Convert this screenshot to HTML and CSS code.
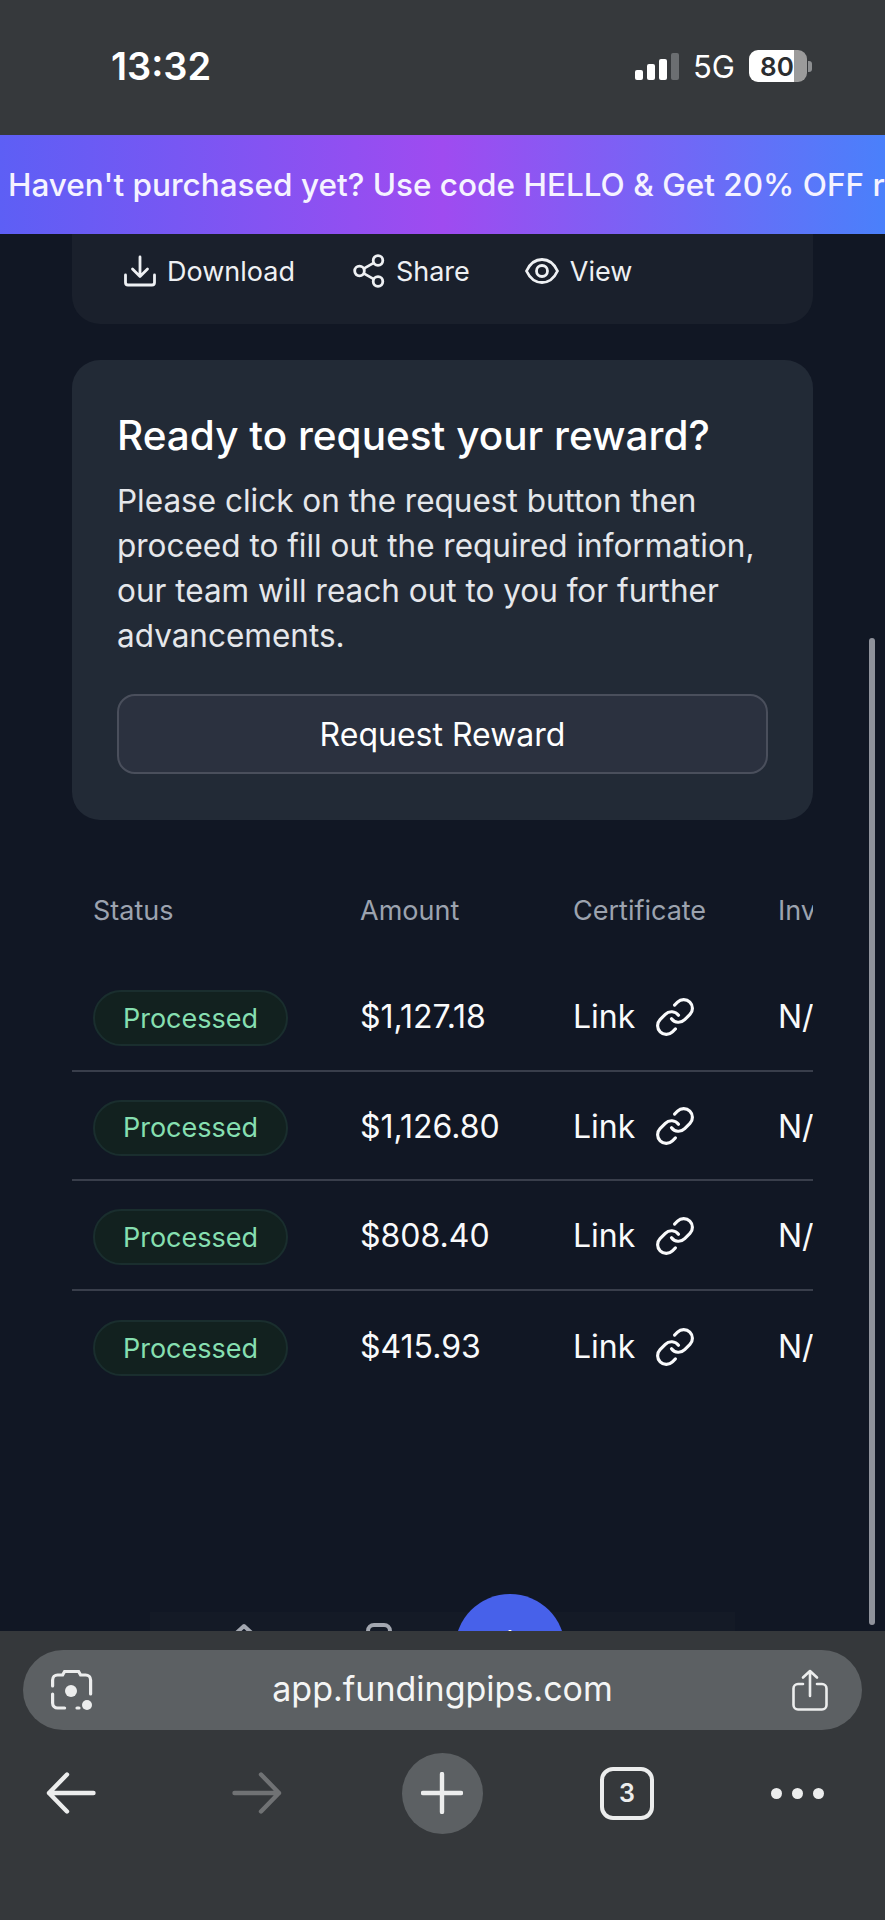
FILE: index.html
```html
<!DOCTYPE html>
<html lang="en">
<head>
    <meta charset="UTF-8">
    <meta name="viewport" content="width=device-width, initial-scale=1.0">
    <title>FundingPips</title>
    <link rel="stylesheet" href="styles.css">
</head>
<body>
    <div id="screen">
        <div class="status-bar">
            <span class="time">13:32</span>
            <div class="status-right">
                <div class="signal">
                    <span class="bar bar-1"></span>
                    <span class="bar bar-2"></span>
                    <span class="bar bar-3"></span>
                    <span class="bar bar-4"></span>
                </div>
                <span class="network">5G</span>
                <div class="battery"><span>80</span></div>
                <span class="battery-nub"></span>
            </div>
        </div>

        <div class="promo">Haven't purchased yet? Use code HELLO &amp; Get 20% OFF right now</div>

        <div id="page">
            <div class="card actions-card">
                <a class="action">
                    <svg width="32" height="32" viewBox="0 0 32 32" fill="none" stroke="currentColor" stroke-width="2.8" stroke-linecap="round" stroke-linejoin="round"><path d="M16 2v19M8.5 14l7.500 7.500 7.500-7.500"/><path d="M1.500 20v7.500a2.500 2.500 0 0 0 2.500 2.500h24a2.500 2.500 0 0 0 2.500-2.500V20"/></svg>
                    Download
                </a>
                <a class="action">
                    <svg width="32" height="34" viewBox="0 0 32 34" fill="none" stroke="currentColor" stroke-width="2.8"><circle cx="6.500" cy="17" r="4.800"/><circle cx="25" cy="6.500" r="4.800"/><circle cx="25" cy="27.500" r="4.800"/><path d="M10.700 14.600l10.100-5.700M10.700 19.400l10.100 5.700"/></svg>
                    Share
                </a>
                <a class="action">
                    <svg width="34" height="26" viewBox="0 0 34 26" fill="none" stroke="currentColor" stroke-width="2.8"><path d="M1.500 13C5 5.500 10.500 1.500 17 1.500S29 5.500 32.500 13C29 20.500 23.500 24.500 17 24.500S5 20.500 1.500 13z"/><circle cx="17" cy="13" r="5.500"/></svg>
                    View
                </a>
            </div>

            <div class="card reward-card">
                <h2>Ready to request your reward?</h2>
                <p>Please click on the request button then proceed to fill out the required information, our team will reach out to you for further advancements.</p>
                <button class="reward-btn">Request Reward</button>
            </div>

            <div class="table-wrap">
                <div class="row head-row">
                    <span>Status</span>
                    <span>Amount</span>
                    <span>Certificate</span>
                    <span>Invoice</span>
                </div>
                <div class="row">
                    <span><span class="pill">Processed</span></span>
                    <span>$1,127.18</span>
                    <span class="link">Link <svg width="42" height="42" viewBox="0 0 24 24" fill="none" stroke="currentColor" stroke-width="1.800" stroke-linecap="round" stroke-linejoin="round"><path d="M10 13a5 5 0 0 0 7.540.54l3-3a5 5 0 0 0-7.070-7.070l-1.720 1.710"/><path d="M14 11a5 5 0 0 0-7.540-.54l-3 3a5 5 0 0 0 7.070 7.070l1.710-1.710"/></svg></span>
                    <span>N/A</span>
                </div>
                <div class="row">
                    <span><span class="pill">Processed</span></span>
                    <span>$1,126.80</span>
                    <span class="link">Link <svg width="42" height="42" viewBox="0 0 24 24" fill="none" stroke="currentColor" stroke-width="1.800" stroke-linecap="round" stroke-linejoin="round"><path d="M10 13a5 5 0 0 0 7.540.54l3-3a5 5 0 0 0-7.070-7.070l-1.720 1.710"/><path d="M14 11a5 5 0 0 0-7.540-.54l-3 3a5 5 0 0 0 7.070 7.070l1.710-1.710"/></svg></span>
                    <span>N/A</span>
                </div>
                <div class="row">
                    <span><span class="pill">Processed</span></span>
                    <span>$808.40</span>
                    <span class="link">Link <svg width="42" height="42" viewBox="0 0 24 24" fill="none" stroke="currentColor" stroke-width="1.800" stroke-linecap="round" stroke-linejoin="round"><path d="M10 13a5 5 0 0 0 7.540.54l3-3a5 5 0 0 0-7.070-7.070l-1.720 1.710"/><path d="M14 11a5 5 0 0 0-7.540-.54l-3 3a5 5 0 0 0 7.070 7.070l1.710-1.710"/></svg></span>
                    <span>N/A</span>
                </div>
                <div class="row">
                    <span><span class="pill">Processed</span></span>
                    <span>$415.93</span>
                    <span class="link">Link <svg width="42" height="42" viewBox="0 0 24 24" fill="none" stroke="currentColor" stroke-width="1.800" stroke-linecap="round" stroke-linejoin="round"><path d="M10 13a5 5 0 0 0 7.540.54l3-3a5 5 0 0 0-7.070-7.070l-1.720 1.710"/><path d="M14 11a5 5 0 0 0-7.540-.54l-3 3a5 5 0 0 0 7.070 7.070l1.710-1.710"/></svg></span>
                    <span>N/A</span>
                </div>
            </div>

            <!-- floating app nav, mostly hidden behind the browser bar -->
            <div class="float-nav">
                <svg class="nav-home" width="32" height="32" viewBox="0 0 32 32" fill="none" stroke="#a3a7b0" stroke-width="4" stroke-linejoin="round"><path d="M4 14L16 3l12 11v14H4z"/></svg>
                <span class="nav-box"></span>
                <span class="nav-fab">
                    <svg width="38" height="38" viewBox="0 0 38 38" fill="none" stroke="#fff" stroke-width="3" stroke-linecap="round"><path d="M19 1v36M1 19h36"/></svg>
                </span>
            </div>
            <span class="scrollbar"></span>
        </div>

        <div class="browser-bar">
            <div class="url-bar">
                <svg width="42" height="42" viewBox="0 0 42 42" fill="none" stroke="#eceded" stroke-width="3.200" stroke-linecap="round"><path d="M1.600 17V11a5 5 0 0 1 5-5h5l2-3.500h14l2 3.500h5a5 5 0 0 1 5 5v14"/><path d="M1.600 25v9a5 5 0 0 0 5 5h7M26 39h2"/><circle cx="20" cy="22" r="6" fill="#eceded" stroke="none"/><circle cx="36" cy="36" r="5" fill="#eceded" stroke="none"/></svg>
                <span class="url">app.fundingpips.com</span>
                <svg width="36" height="42" viewBox="0 0 36 42" fill="none" stroke="#eceded" stroke-width="2.600" stroke-linecap="round" stroke-linejoin="round"><path d="M18 27V2M11 8.500L18 2l7 6.500"/><path d="M11 15H6a4.500 4.500 0 0 0-4.500 4.500V36A4.500 4.500 0 0 0 6 40.500h24a4.500 4.500 0 0 0 4.500-4.500V19.500A4.500 4.500 0 0 0 30 15h-5"/></svg>
            </div>
            <div class="browser-nav">
                <svg width="50" height="42" viewBox="0 0 50 42" fill="none" stroke="#eceded" stroke-width="4.400" stroke-linecap="round" stroke-linejoin="round"><path d="M47.500 21H3M21 2.500L3 21l18 18.500"/></svg>
                <svg width="50" height="42" viewBox="0 0 50 42" fill="none" stroke="#707274" stroke-width="4.400" stroke-linecap="round" stroke-linejoin="round"><path d="M2.500 21H47M29 2.500L47 21 29 39.500"/></svg>
                <span class="plus-btn">
                    <svg width="42" height="42" viewBox="0 0 42 42" fill="none" stroke="#eceded" stroke-width="4.400" stroke-linecap="round"><path d="M21 2v38M2 21h38"/></svg>
                </span>
                <span class="tabs-btn">3</span>
                <span class="more-btn"><i></i><i></i><i></i></span>
            </div>
        </div>
    </div>
</body>
</html>
```

FILE: styles.css
```css
* {
    box-sizing: border-box;
}

body {
    margin: 0;
    background-color: #111724;
    font-family: Inter, "Liberation Sans", sans-serif;
    color: #f3f4f6;
}

#screen {
    display: flex;
    flex-direction: column;
    width: 885px;
    height: 1920px;
    overflow: hidden;
}

/* phone status bar */
.status-bar {
    flex: none;
    display: flex;
    justify-content: space-between;
    align-items: center;
    height: 135px;
    padding: 0 73px 3px 111px;
    background-color: #36393c;
}

.time {
    font-size: 38px;
    font-weight: 600;
    color: #fff;
}

.status-right {
    display: flex;
    align-items: center;
}

.signal {
    display: flex;
    align-items: flex-end;
    gap: 4px;
    height: 27px;
    margin-right: 14px;
}

.bar {
    width: 8px;
    border-radius: 2px;
    background-color: #fff;
}

.bar-1 { height: 10px; }
.bar-2 { height: 16px; }
.bar-3 { height: 21px; }
.bar-4 { height: 27px; background-color: #6b6e71; }

.network {
    margin-right: 14px;
    font-size: 31px;
    color: #fff;
}

.battery {
    display: flex;
    align-items: center;
    width: 58px;
    height: 32px;
    padding-left: 11px;
    border-radius: 9px;
    background: linear-gradient(to right, #fff 45px, #9b9b9b 45px);
    font-size: 26px;
    font-weight: 600;
    color: #2b2d30;
}

.battery-nub {
    width: 4px;
    height: 11px;
    margin-left: 1px;
    border-radius: 0 3px 3px 0;
    background-color: #8d8f91;
}

/* promo banner */
.promo {
    flex: none;
    height: 99px;
    padding-left: 8px;
    line-height: 100px;
    font-size: 31.5px;
    font-weight: 500;
    white-space: nowrap;
    overflow: hidden;
    color: #f5f3ff;
    background: linear-gradient(to right, #5d5ff5 0%, #9f4bf0 50%, #4a80fb 100%);
}

/* page content */
#page {
    position: relative;
    flex: 1;
    padding: 0 72px;
    overflow: hidden;
    background-color: #111724;
}

.card {
    border-radius: 28px;
}

.actions-card {
    display: flex;
    height: 90px;
    padding: 19px 0 0 52px;
    border-radius: 0 0 28px 28px;
    background-color: #1a202c;
}

.action {
    display: flex;
    align-items: center;
    gap: 11px;
    height: 36px;
    margin-right: 58px;
    font-size: 27px;
    color: #eef0f3;
}

.action:nth-child(2) {
    margin-right: 55px;
}

.reward-card {
    margin-top: 36px;
    padding: 49px 45px 46px;
    background-color: #222a36;
}

.reward-card h2 {
    margin: 0 0 15px;
    font-size: 40.5px;
    line-height: 54px;
    font-weight: 500;
    color: #fff;
}

.reward-card p {
    margin: 0 0 36px;
    font-size: 31.5px;
    line-height: 45px;
    color: #e5e7eb;
}

.reward-btn {
    display: block;
    width: 100%;
    height: 80px;
    border: 2px solid #4a4f5c;
    border-radius: 18px;
    background-color: #2b313f;
    font-family: inherit;
    font-size: 32px;
    font-weight: 400;
    color: #fff;
}

/* table, cut off on the right like the original scroller */
.table-wrap {
    margin-top: 50px;
    overflow: hidden;
}

.row {
    display: grid;
    grid-template-columns: 267px 213px 205px 200px;
    align-items: center;
    width: 885px;
    height: 109.6px;
    padding-top: 2px;
    border-bottom: 2px solid #393e4b;
    font-size: 32px;
    white-space: nowrap;
    color: #f9fafb;
}

.row > span {
    padding-left: 21px;
}

.row:last-child {
    border-bottom: none;
}

.head-row {
    height: 92px;
    padding-top: 0;
    padding-bottom: 12px;
    border-bottom: none;
    font-size: 27px;
    color: #9ca3af;
}

.pill {
    display: inline-flex;
    justify-content: center;
    align-items: center;
    width: 195px;
    height: 56px;
    margin-top: 3px;
    border: 2px solid #1a2e2e;
    border-radius: 28px;
    background-color: #12211f;
    font-size: 27px;
    color: #86dfb0;
}

.link {
    display: flex;
    align-items: center;
    gap: 19px;
}

/* floating nav */
.float-nav {
    position: absolute;
    top: 1378px;
    left: 150px;
    display: flex;
    align-items: flex-start;
    width: 585px;
    height: 100px;
    background-color: #141a26;
}

.nav-home {
    margin: 11px 0 0 78px;
}

.nav-box {
    width: 26px;
    height: 30px;
    margin: 11px 0 0 106px;
    border: 4px solid #a3a7b0;
    border-radius: 8px;
}

.nav-fab {
    display: flex;
    justify-content: center;
    align-items: center;
    width: 110px;
    height: 110px;
    margin: -18px 0 0 63px;
    border-radius: 50%;
    background-color: #4761ea;
}

.scrollbar {
    position: absolute;
    top: 404px;
    right: 10px;
    width: 6px;
    height: 987px;
    border-radius: 3px;
    background-color: #8f929b;
}

/* browser chrome */
.browser-bar {
    flex: none;
    height: 289px;
    padding: 19px 23px 0;
    background-color: #35383b;
}

.url-bar {
    display: flex;
    justify-content: space-between;
    align-items: center;
    height: 80px;
    padding: 0 34px 0 28px;
    border-radius: 40px;
    background-color: #5c6063;
}

.url {
    padding-bottom: 4px;
    font-size: 34px;
    color: #f4f5f5;
}

.browser-nav {
    display: grid;
    grid-template-columns: 142px 230px 140px 230px 110px;
    justify-items: center;
    align-items: center;
    height: 82px;
    margin: 22px 0 0 -23px;
}

.plus-btn {
    display: flex;
    justify-content: center;
    align-items: center;
    width: 81px;
    height: 81px;
    border-radius: 50%;
    background-color: #5c6063;
}

.tabs-btn {
    display: flex;
    justify-content: center;
    align-items: center;
    width: 54px;
    height: 53px;
    border: 4px solid #eceded;
    border-radius: 13px;
    font-size: 25px;
    font-weight: 600;
    color: #eceded;
}

.more-btn {
    display: flex;
    gap: 10px;
}

.more-btn i {
    width: 11px;
    height: 11px;
    border-radius: 50%;
    background-color: #eceded;
}
```
